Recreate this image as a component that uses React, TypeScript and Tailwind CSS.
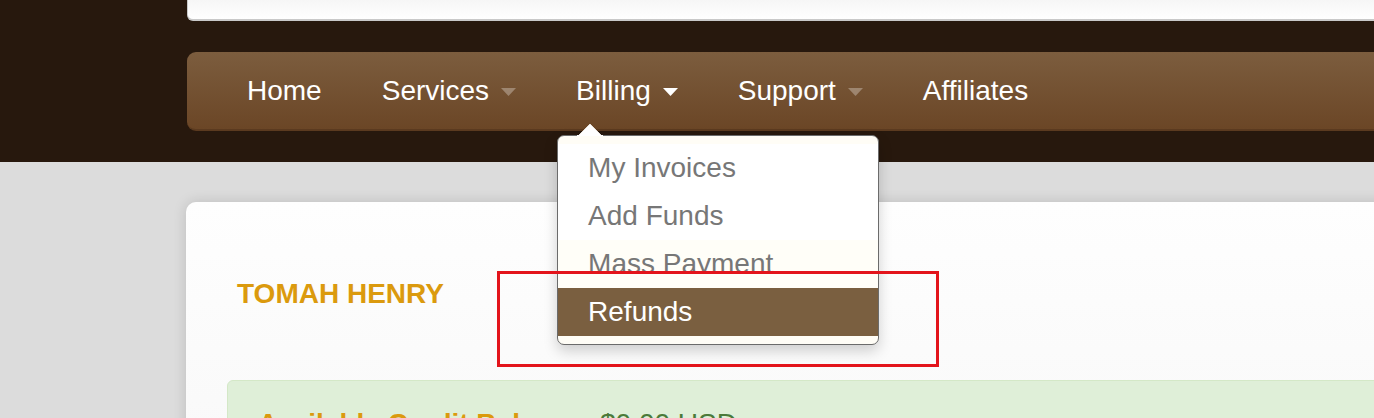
import React from 'react'

const navItems = [
  { label: 'Home', caret: null },
  { label: 'Services', caret: 'dim' },
  { label: 'Billing', caret: 'open' },
  { label: 'Support', caret: 'dim' },
  { label: 'Affiliates', caret: null },
]

const billingMenu = ['My Invoices', 'Add Funds', 'Mass Payment', 'Refunds']

function Caret({ open }: { open: boolean }) {
  return (
    <svg width="15" height="8" viewBox="0 0 15 8" className="ml-3 mt-[2px]">
      <polygon points="0,0 15,0 7.5,8" fill={open ? '#ffffff' : 'rgba(255,255,255,0.3)'} />
    </svg>
  )
}

function BillingDropdown() {
  return (
    <div className="absolute left-[11px] top-[83px] z-10 w-[322px]">
      <svg width="26" height="13" viewBox="0 0 26 13" className="absolute left-[20px] top-[-12px]">
        <polygon points="1,13 13,1 25,13" fill="#ffffff" stroke="#e6e2dc" strokeWidth="1" />
        <rect x="0" y="12" width="26" height="2" fill="#ffffff" />
      </svg>
      <div className="overflow-hidden rounded-[7px] border border-[#6b6b6b] bg-[#fffdf6] py-2 shadow-[0_6px_14px_rgba(0,0,0,0.18)]">
        {billingMenu.map((item) => {
          if (item === 'Refunds') {
            return (
              <div key={item} className="flex h-12 items-center bg-[#7a5f40] pl-[30px] text-[28px] leading-8 text-white">
                {item}
              </div>
            )
          }
          if (item === 'Mass Payment') {
            // screenshot cuts this row off just under the baseline
            return (
              <div key={item} className="h-12 bg-[#fffef8] pl-[30px] pt-2">
                <span className="block h-[26px] overflow-hidden text-[28px] leading-8 text-[#777777]">{item}</span>
              </div>
            )
          }
          return (
            <div key={item} className="flex h-12 items-center bg-white pl-[30px] text-[28px] leading-8 text-[#777777]">
              {item}
            </div>
          )
        })}
      </div>
    </div>
  )
}

export default function App() {
  return (
    <div className="relative h-[418px] w-full overflow-hidden bg-[#dcdcdc] font-['Liberation_Sans',Arial,sans-serif]">
      <header className="h-[162px] bg-[#27180d] pl-[187px]">
        <div className="h-[21px] w-[1400px] rounded-bl-[6px] border-b-2 border-l border-[#c9c9c9] bg-gradient-to-b from-[#f6f6f6] to-white" />

        <nav className="mt-[31px] flex h-[79px] w-[1400px] items-center rounded-l-[9px] border-b-2 border-[#5b3a1f] bg-gradient-to-b from-[#7c5d3e] to-[#6b4626] pl-[30px]">
          {navItems.map((item) => (
            <div key={item.label} className="relative flex h-full items-center px-[30px]">
              <span className="text-[28px] leading-8 text-white">{item.label}</span>
              {item.caret ? <Caret open={item.caret === 'open'} /> : null}
              {item.label === 'Billing' ? <BillingDropdown /> : null}
            </div>
          ))}
        </nav>
      </header>

      <main className="pl-[186px] pt-[40px]">
        <div className="w-[1400px] rounded-l-[10px] bg-gradient-to-b from-[#fefefe] to-[#f8f8f8] pl-[41px] pt-[76px] shadow-[0_0_14px_rgba(0,0,0,0.14)]">
          <h2 className="pl-[10px] text-[28px] font-bold leading-8 text-[#db9a0e]">TOMAH HENRY</h2>

          <div className="mt-[70px] flex h-[120px] items-start rounded-l-[6px] border border-[#d4e8c7] bg-[#dfefd8] pl-[30px] pt-[27px]">
            <span className="w-[342px] text-[28px] font-bold leading-8 text-[#db9a0e]">Available Credit Balance</span>
            <span className="text-[28px] leading-8 text-[#4b7a3a]">$0.00 USD</span>
          </div>
        </div>
      </main>

      <div className="pointer-events-none absolute left-[497px] top-[271px] z-20 h-[96px] w-[442px] border-[3px] border-[#e3141b]" />
    </div>
  )
}
